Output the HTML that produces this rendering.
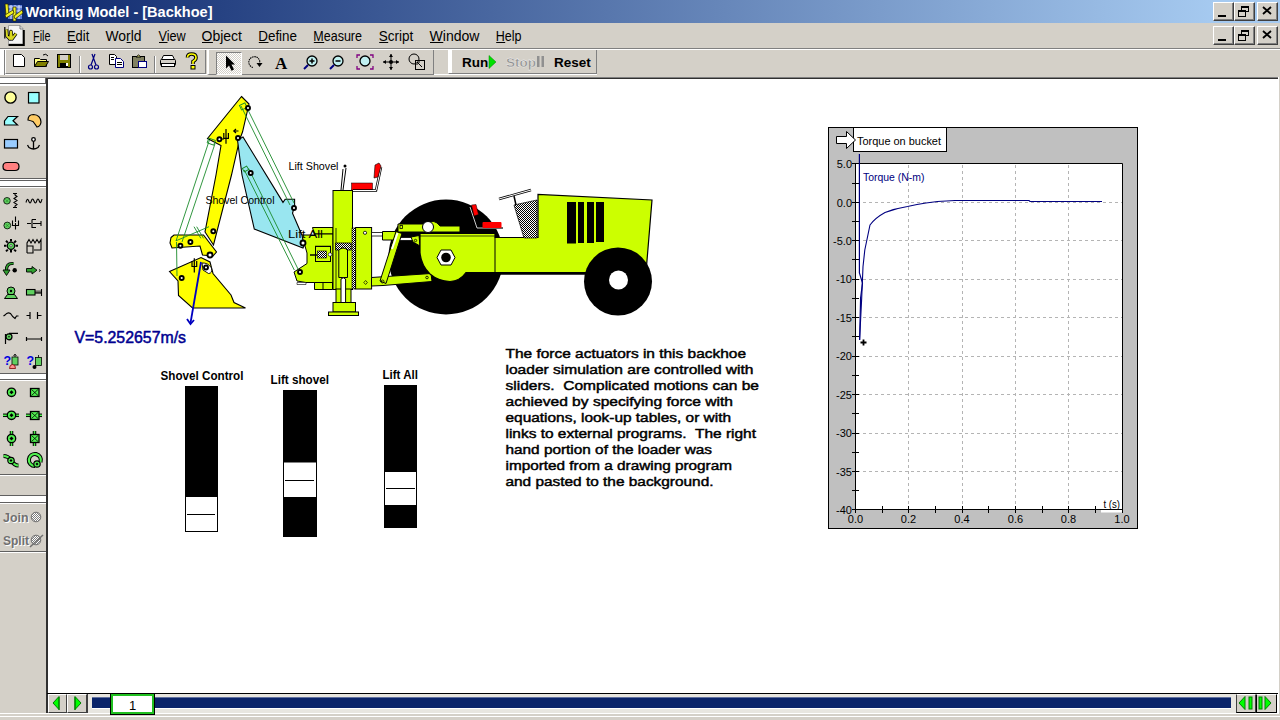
<!DOCTYPE html>
<html><head><meta charset="utf-8">
<style>
*{margin:0;padding:0;box-sizing:border-box}
html,body{width:1280px;height:720px;overflow:hidden;background:#D4D0C8;font-family:"Liberation Sans",sans-serif;position:relative}
.a{position:absolute}
#title{left:0;top:0;width:1280px;height:23px;background:linear-gradient(to right,#0A246A 0%,#A6CAF0 95%)}
#title .t{left:25px;top:3px;color:#fff;font-weight:bold;font-size:15px;letter-spacing:0.1px;white-space:nowrap}
.cb{width:21px;height:19px;background:#D4D0C8;border-top:1px solid #fff;border-left:1px solid #fff;border-right:1px solid #404040;border-bottom:1px solid #404040;box-shadow:inset -1px -1px 0 #808080}
.menu{top:27px;font-size:14px;color:#000;white-space:nowrap}
.menu u{text-decoration:none;border-bottom:1px solid #000}
#canvas{left:46px;top:78px;width:1232px;height:636px;background:#fff;border-left:2px solid #303030;border-top:1px solid #303030;box-shadow:-1px 0 0 #D4D0C8}
.lbl{font-size:12px;white-space:nowrap}
</style></head><body>
<div id="title" class="a">
  <svg class="a" style="left:2px;top:2px" width="22" height="20" viewBox="0 0 22 20">
    <rect x="6" y="3" width="14" height="14" fill="#5a7ad8"/>
    <g stroke="#fff" stroke-width="1" opacity="0.8"><line x1="6" y1="5" x2="20" y2="5"/><line x1="6" y1="9" x2="20" y2="9"/><line x1="6" y1="13" x2="20" y2="13"/><line x1="9" y1="3" x2="9" y2="17"/><line x1="13" y1="3" x2="13" y2="17"/><line x1="17" y1="3" x2="17" y2="17"/></g>
    <g fill="#f0f020" stroke="#202000" stroke-width="0.7"><polygon points="3,2 6,2 7,14 4,14"/><polygon points="11,5 14,5 14,19 11,19"/><polygon points="3,13 11,8 12,11 4,16"/><polygon points="12,14 20,8 21,11 13,17"/></g>
  </svg>
  <svg class="a" style="left:0;top:0" width="300" height="23"><text x="25.5" y="16.5" font-family="Liberation Sans" font-weight="bold" font-size="15" fill="#fff" textLength="187" lengthAdjust="spacingAndGlyphs">Working Model - [Backhoe]</text></svg>
  <div class="a cb" style="left:1213px;top:2px"></div>
  <div class="a cb" style="left:1234px;top:2px"></div>
  <div class="a cb" style="left:1257px;top:2px"></div>
</div>
<!-- menu bar -->
<div class="a" style="left:0;top:23px;width:1280px;height:25px;background:#D4D0C8"></div>
<div class="a" style="left:0;top:48px;width:1280px;height:1px;background:#808080"></div>
<div class="a" style="left:0;top:49px;width:1280px;height:1px;background:#fff"></div>
<svg class="a" style="left:0;top:23px" width="600" height="25" viewBox="0 23 600 25" font-family="Liberation Sans">
<text x="33.0" y="41" font-size="14" fill="#000" textLength="17.5" lengthAdjust="spacingAndGlyphs">File</text>
<rect x="33.5" y="42" width="6.6" height="1" fill="#000"/>
<text x="67.0" y="41" font-size="14" fill="#000" textLength="22.25" lengthAdjust="spacingAndGlyphs">Edit</text>
<rect x="67.5" y="42" width="8.6" height="1" fill="#000"/>
<text x="105.5" y="41" font-size="14" fill="#000" textLength="36" lengthAdjust="spacingAndGlyphs">World</text>
<rect x="126.6" y="42" width="4.6" height="1" fill="#000"/>
<text x="158.5" y="41" font-size="14" fill="#000" textLength="27.25" lengthAdjust="spacingAndGlyphs">View</text>
<rect x="159.0" y="42" width="8.5" height="1" fill="#000"/>
<text x="201.5" y="41" font-size="14" fill="#000" textLength="40.5" lengthAdjust="spacingAndGlyphs">Object</text>
<rect x="202.0" y="42" width="10.9" height="1" fill="#000"/>
<text x="258.25" y="41" font-size="14" fill="#000" textLength="38.75" lengthAdjust="spacingAndGlyphs">Define</text>
<rect x="258.8" y="42" width="9.7" height="1" fill="#000"/>
<text x="313.25" y="41" font-size="14" fill="#000" textLength="48.75" lengthAdjust="spacingAndGlyphs">Measure</text>
<rect x="313.8" y="42" width="10.4" height="1" fill="#000"/>
<text x="378.75" y="41" font-size="14" fill="#000" textLength="34.5" lengthAdjust="spacingAndGlyphs">Script</text>
<rect x="379.2" y="42" width="9.0" height="1" fill="#000"/>
<text x="429.5" y="41" font-size="14" fill="#000" textLength="50" lengthAdjust="spacingAndGlyphs">Window</text>
<rect x="430.0" y="42" width="13.3" height="1" fill="#000"/>
<text x="495.75" y="41" font-size="14" fill="#000" textLength="25.75" lengthAdjust="spacingAndGlyphs">Help</text>
<rect x="496.2" y="42" width="9.0" height="1" fill="#000"/>
</svg>
<div class="a cb" style="left:1213px;top:26px"></div>
<div class="a cb" style="left:1234px;top:26px"></div>
<div class="a cb" style="left:1257px;top:26px"></div>



<svg class="a" style="left:1213px;top:0" width="67" height="48" viewBox="1213 0 67 48">
 <g fill="#000">
  <rect x="1218" y="15" width="8" height="2"/>
  <rect x="1259" y="14" width="0" height="0"/>
 </g>
 <g fill="none" stroke="#000" stroke-width="1">
  <rect x="1241.5" y="6.5" width="7" height="5"/><rect x="1238.5" y="10.5" width="7" height="6" fill="#D4D0C8"/>
  <path d="M1241.5,7.5 h7 M1238.5,11.5 h7" />
 </g>
 <path d="M1263,7 L1271,14 M1271,7 L1263,14" stroke="#000" stroke-width="1.8"/>
 <g transform="translate(0,24)">
  <rect x="1218" y="15" width="8" height="2" fill="#000"/>
  <g fill="none" stroke="#000" stroke-width="1">
   <rect x="1241.5" y="6.5" width="7" height="5"/><rect x="1238.5" y="10.5" width="7" height="6" fill="#D4D0C8"/>
   <path d="M1241.5,7.5 h7 M1238.5,11.5 h7" />
  </g>
  <path d="M1263,7 L1271,14 M1271,7 L1263,14" stroke="#000" stroke-width="1.8"/>
 </g>
</svg>
<svg class="a" style="left:0;top:24px" width="30" height="24" viewBox="0 24 30 24">
 <path d="M8.5,25.5 H20 L23,28.5 V44 H8.5z" fill="#f4f4f4" stroke="#a0a0a0"/>
 <path d="M23.8,30 V45 H8.5" fill="none" stroke="#000" stroke-width="2"/>
 <path d="M20,25.5 V29 H23" fill="none" stroke="#606060" stroke-width="0.8"/>
 <path d="M4.8,27 V38.5" stroke="#000" stroke-width="1.2"/>
 <path d="M6.5,29.5 L7,36 L10,39 L11,31.5 L12,39 L16,33.5" fill="none" stroke="#000" stroke-width="3.4" stroke-linejoin="round"/>
 <path d="M6.5,29.5 L7,36 L10,39 L11,31.5 L12,39 L16,33.5" fill="none" stroke="#d8d820" stroke-width="2" stroke-linejoin="round"/>
</svg>

<!-- toolbar -->
<div class="a" style="left:0;top:50px;width:1280px;height:27px;background:#D4D0C8"></div>
<div class="a" style="left:0;top:74px;width:597px;height:1px;background:#fff"></div>
<div class="a" style="left:0;top:77px;width:1280px;height:1px;background:#808080"></div>
<div class="a" style="left:0;top:50px;width:4px;height:25px;background:#fff"></div>
<div class="a" style="left:4px;top:50px;width:1px;height:25px;background:#808080"></div>
<div class="a" style="left:5px;top:50px;width:201px;height:24px;border-left:1px solid #fff;border-right:1px solid #808080;border-bottom:1px solid #808080"></div>
<div class="a" style="left:207px;top:50px;width:227px;height:25px;border-left:2px solid #fff;border-right:1px solid #808080;border-bottom:1px solid #808080"></div>
<div class="a" style="left:448px;top:50px;width:149px;height:24px;border-left:1px solid #fff;border-right:1px solid #808080;border-bottom:1px solid #808080;box-shadow:inset 3px 0 0 #fff"></div>
<div class="a" style="left:216px;top:52px;width:26px;height:23px;background:repeating-conic-gradient(#fff 0 25%,#D4D0C8 0 50%) 0 0/2px 2px;border-top:1px solid #808080;border-left:1px solid #808080;border-right:1px solid #fff;border-bottom:1px solid #fff"></div>
<div class="a" style="left:79px;top:56px;width:1px;height:17px;background:#808080;box-shadow:1px 0 0 #fff"></div>
<div class="a" style="left:154px;top:56px;width:1px;height:17px;background:#808080;box-shadow:1px 0 0 #fff"></div>
<svg class="a" style="left:0;top:50px" width="620" height="27" viewBox="0 50 620 27">
 <!-- new -->
 <path d="M13.5,54.5 h8 l3,3 v9 h-11z" fill="#fff" stroke="#000"/>
 <!-- open -->
 <path d="M34.5,58.5 h5 l1,1 h6 v7 h-12z" fill="#ffff80" stroke="#000"/>
 <path d="M34.5,66.5 l3,-5 h11 l-3,5z" fill="#808000" stroke="#000"/>
 <path d="M43,55 q3,-2 5,1" fill="none" stroke="#000"/>
 <!-- save -->
 <rect x="57.5" y="54.5" width="13" height="13" fill="#808000" stroke="#000"/>
 <rect x="60" y="55" width="8" height="5" fill="#D4D0C8"/>
 <rect x="60" y="63" width="8" height="4" fill="#000"/><rect x="66" y="63" width="2" height="3" fill="#fff"/>
 <!-- scissors -->
 <g stroke="#000080" fill="none" stroke-width="1.2"><circle cx="90.5" cy="67" r="2"/><circle cx="96.5" cy="67" r="2"/><path d="M91,65 L95,54 M96,65 L92,54"/></g>
 <!-- copy -->
 <path d="M109.5,54.5 h5 l2,2 v8 h-7z" fill="#fff" stroke="#000"/>
 <path d="M115.5,58.5 h5 l3,3 v6 h-8z" fill="#fff" stroke="#000080"/>
 <g stroke="#000"><line x1="111" y1="57.5" x2="114" y2="57.5"/><line x1="111" y1="59.5" x2="114" y2="59.5"/><line x1="117" y1="62.5" x2="122" y2="62.5"/><line x1="117" y1="64.5" x2="122" y2="64.5"/></g>
 <!-- paste -->
 <rect x="132.5" y="56.5" width="12" height="11" fill="#808060" stroke="#000"/>
 <path d="M136,57 l2.5,-2 l2.5,2z" fill="#ffff80" stroke="#000"/>
 <rect x="138.5" y="61.5" width="8" height="6" fill="#fff" stroke="#000080"/>
 <!-- print -->
 <path d="M163.5,55.5 h9 l2,4 h-13z" fill="#fff" stroke="#000"/>
 <rect x="160.5" y="59.5" width="15" height="6" rx="1" fill="#D4D0C8" stroke="#000"/>
 <rect x="161.5" y="63.5" width="13" height="3" fill="#fff" stroke="#000"/>
 <!-- help -->
 <path d="M187.5,57.5 Q187.5,54 191.5,54 Q196,54 196,57.5 Q196,60 193,61.5 V64" fill="none" stroke="#000" stroke-width="3.6"/>
 <path d="M187.5,57.5 Q187.5,54 191.5,54 Q196,54 196,57.5 Q196,60 193,61.5 V64" fill="none" stroke="#ffff00" stroke-width="1.6"/>
 <rect x="191" y="65.5" width="4" height="3.5" fill="#ffff00" stroke="#000"/>
 <!-- arrow -->
 <path d="M226,55.5 L235,64.5 H231.5 L234,69.5 L231.5,70.8 L229,65.5 L226,68.5z" fill="#000"/>
 <!-- rotate -->
 <path d="M259.5,64 A5.5,5.5 0 1,0 253,67.5" fill="none" stroke="#000" stroke-width="1.1" stroke-dasharray="1.5 0.7"/>
 <path d="M256.5,63 h6 l-3,4z" fill="#000"/>
 <!-- A -->
 <text x="275" y="69" font-family="Liberation Serif" font-weight="bold" font-size="17" fill="#000">A</text>
 <!-- zoom in -->
 <circle cx="312" cy="61" r="5" fill="#c0f0f0" stroke="#000" stroke-width="1.3"/>
 <path d="M309.5,61 h5 M312,58.5 v5" stroke="#000" stroke-width="1.5"/>
 <path d="M308,65 l-4,4" stroke="#000080" stroke-width="2"/>
 <!-- zoom out -->
 <circle cx="338" cy="61" r="5" fill="#c0f0f0" stroke="#000" stroke-width="1.3"/>
 <path d="M335.5,61 h5" stroke="#000" stroke-width="1.5"/>
 <path d="M334,65 l-4,4" stroke="#000080" stroke-width="2"/>
 <!-- zoom fit -->
 <circle cx="365" cy="61" r="5" fill="#c0f0f0" stroke="#000" stroke-width="1.3"/>
 <path d="M357,58 v-3 h3 M370,55 h3 v3 M357,66 v3 h3 M373,66 v3 h-3" stroke="#800080" stroke-width="1.3" fill="none"/>
 <!-- move -->
 <circle cx="391" cy="62" r="2" fill="#000"/>
 <path d="M383,62 h16 M391,54 v16" stroke="#000"/>
 <path d="M383,62 l3,-2 v4z M399,62 l-3,-2 v4z M391,54 l-2,3 h4z M391,70 l-2,-3 h4z" fill="#000"/>
 <!-- zoom box -->
 <circle cx="414" cy="59" r="5" fill="none" stroke="#000"/>
 <rect x="415.5" y="60.5" width="9" height="9" fill="#D4D0C8" stroke="#000"/>
 <path d="M417,62 l5,5 M417,62 h3 M417,62 v3" stroke="#000"/>
 <!-- run/stop/reset -->
 <text x="462" y="67" font-family="Liberation Sans" font-weight="bold" font-size="13.5" fill="#000">Run</text>
 <path d="M489,55.5 l7,6.5 l-7,6.5z" fill="#00e000" stroke="#008000" stroke-width="0.5"/>
 <text x="506" y="67" font-family="Liberation Sans" font-weight="bold" font-size="13.5" fill="#909090" stroke="#fff" stroke-width="0.3">Stop</text>
 <rect x="537" y="56" width="2.5" height="11" fill="#909090"/><rect x="541.5" y="56" width="2.5" height="11" fill="#909090"/>
 <text x="554" y="67" font-family="Liberation Sans" font-weight="bold" font-size="13.5" fill="#000">Reset</text>
</svg>

<!-- canvas -->
<div id="canvas" class="a"></div>



<!-- scene -->
<svg class="a" style="left:0;top:0" width="1280" height="720" viewBox="0 0 1280 720" font-family="Liberation Sans">
 <!-- rear wheel -->
 <circle cx="446" cy="257" r="57.5" fill="#000"/>
 <!-- backhoe mount left block -->
 <defs>
  <pattern id="dots" width="2" height="2" patternUnits="userSpaceOnUse"><rect width="2" height="2" fill="#fff"/><rect width="1" height="1" fill="#000"/><rect x="1" y="1" width="1" height="1" fill="#000"/></pattern>
 </defs>
 <path d="M312.5,227.5 H333 V282.5 H306 L297,281 L294,272 L307,263.5 V253 L305,246 L301,235 H314.5z" fill="#CCFF00" stroke="#000"/>
 <path d="M314.5,233.8 H333 M315,246.3 H331" stroke="#000" stroke-width="1.2"/>
 <rect x="315.5" y="246.5" width="15" height="15" fill="none" stroke="#000"/>
 <rect x="317.5" y="251" width="9" height="7" fill="url(#dots)" stroke="#000" stroke-width="0.6"/>
 <path d="M310,255 H317" stroke="#000" stroke-width="1.5"/>
 <circle cx="330" cy="254.5" r="1.8" fill="#fff" stroke="#000" stroke-width="0.6"/>
 <path d="M297,282.5 H306 V284.5 H297z" fill="#fff" stroke="#000" stroke-width="0.6"/>
 <path d="M314.5,282.5 H332.5 V289.5 H314.5z M323,282.5 V289.5" fill="#CCFF00" stroke="#000"/>
 <!-- tower -->
 <rect x="333" y="190.5" width="19.5" height="99" fill="#CCFF00" stroke="#000"/>
 <path d="M336,228 V289" stroke="#000" stroke-width="0.8"/>
 <rect x="352" y="228" width="3.6" height="61" fill="url(#dots)" stroke="#000" stroke-width="0.6"/>
 <rect x="355.6" y="227.5" width="16" height="61.5" fill="#CCFF00" stroke="#000"/>
 <circle cx="365" cy="232.8" r="1.6" fill="#fff" stroke="#000" stroke-width="0.8"/>
 <path d="M365.6,280.5 l1.8,2 l-1.8,2 l-1.8,-2z" fill="none" stroke="#000" stroke-width="0.7"/>
 <path d="M335.6,250 V243 H351.2 V250 H346 Q343,246 340,250z" fill="url(#dots)" stroke="#000" stroke-width="0.8"/>
 <path d="M338.8,250 Q343,246 347.5,250 V277.5 H338.8z" fill="#CCFF00" stroke="#000"/>
 <rect x="336" y="289" width="15" height="13.5" fill="#CCFF00" stroke="#000"/>
 <path d="M341,302.5 V279 Q343.3,276.5 345.6,279 V302.5z" fill="#fff" stroke="#000"/>
 <rect x="333" y="302.5" width="22.5" height="9.5" fill="#CCFF00" stroke="#000"/>
 <rect x="328.5" y="312" width="30" height="3.5" fill="#CCFF00" stroke="#000"/>
 <!-- levers -->
 <path d="M341,190 L343,169 M343,190 L346,168" stroke="#000" stroke-width="1"/>
 <circle cx="345" cy="166" r="1.5" fill="#000"/>
 <rect x="351.5" y="183" width="21" height="7" fill="#ff0000" stroke="#000" stroke-width="0.5"/>
 <path d="M353,190.5 H376 L381,167" fill="none" stroke="#000" stroke-width="2.5"/>
 <path d="M353,190.5 H376 L381,167" fill="none" stroke="#fff" stroke-width="1"/>
 <path d="M375,165 L379,163 L381,166 L378,177 L374,178z" fill="#ff0000" stroke="#000" stroke-width="0.6"/>
 <!-- links to body -->
 <path d="M371.5,232.5 H384 V236 H371.5z" fill="#fff" stroke="#000" stroke-width="0.8"/>
 <path d="M382.5,231.5 H396 V240 H382.5z" fill="#CCFF00" stroke="#000"/>
 <path d="M395,237.5 H413 V240.5 H395z" fill="#fff" stroke="#000" stroke-width="0.8"/>
 <path d="M411,237 L419,235.5 L420,246 L413,242z" fill="#CCFF00" stroke="#000"/>
 <circle cx="415.5" cy="240.5" r="1.2" fill="none" stroke="#000" stroke-width="0.8"/>
 <path d="M371.5,277.5 L431,273.5 L432,281.5 L383,285.5 L371.5,286z" fill="#CCFF00" stroke="#000"/>
 <path d="M380,281 L396,231.5 L402,233.5 L386,283.5z" fill="#CCFF00" stroke="#000"/>
 <path d="M397.5,233 L392,249" stroke="#fff" stroke-width="2"/>
 <circle cx="382.5" cy="281.5" r="1.5" fill="none" stroke="#000" stroke-width="0.8"/>
 <circle cx="427" cy="277.5" r="1.3" fill="none" stroke="#000" stroke-width="0.8"/>
 <!-- fender top -->
 <path d="M398,224 H427 Q434,218 440,226 H460 V232 H398z" fill="#CCFF00" stroke="#000"/>
 <circle cx="428" cy="227" r="5.5" fill="#fff" stroke="#000"/>
 <rect x="400" y="225.5" width="2.5" height="3" fill="none" stroke="#000" stroke-width="0.8"/>
 <!-- seat -->
 <path d="M470,207 L477,228 H503" fill="none" stroke="#000" stroke-width="2"/>
 <path d="M470,207 L477,228 H503" fill="none" stroke="#fff" stroke-width="0.8"/>
 <path d="M471.5,205 L476,204.5 L478.5,214.5 L474,216z" fill="#ff0000" stroke="#000" stroke-width="0.5"/>
 <rect x="482.5" y="222" width="19" height="6" rx="1" fill="#ff0000"/>
 <!-- body -->
 <path d="M420,233.5 H495 V237.5 H538 V194.5 L652,200 L646,272.5 H466 Q460,281 450,281.5 Q438,281 430,274 Q421,265 420,252.5z" fill="#CCFF00" stroke="#000" stroke-width="1.2"/>
 <path d="M495,237.5 V272.5" stroke="#000"/>
 <path d="M420,236 H495" stroke="#000" stroke-width="0.7"/>
 <path d="M466,273.5 H586" stroke="#000" stroke-width="2.5"/>
 <!-- hub -->
 <path d="M441,250 H451 L455,257.5 L451,265 H441 L437,257.5z" fill="#fff" stroke="#000"/>
 <circle cx="446" cy="257.5" r="4.8" fill="#000"/>
 <!-- dashboard -->
 <path d="M514,205 L537,200 V238 L524,238z" fill="url(#dots)" stroke="#000" stroke-width="0.7"/>
 <path d="M499,199 L531,190" stroke="#000" stroke-width="2.5"/>
 <path d="M499,199 L531,190" stroke="#fff" stroke-width="1"/>
 <path d="M514,196 L516,205" stroke="#000" stroke-width="1.5"/>
 <!-- grille -->
 <rect x="567" y="202" width="9" height="41.5" fill="#000"/>
 <rect x="578" y="202" width="6" height="41" fill="#000"/>
 <rect x="587" y="202" width="7" height="41" fill="#000"/>
 <rect x="596" y="202" width="8" height="40" fill="#000"/>
 <!-- front wheel -->
 <circle cx="618" cy="281.5" r="34" fill="#000"/>
 <circle cx="618.5" cy="280" r="9.5" fill="#fff"/>

 <!-- backhoe: boom -->
 <path d="M241.5,96.5 L249,104 L242.5,132 L239.5,140 L231.5,175 L213.5,245 L205,232 L216,175 L221,145.5 L207.5,138.5z" fill="#FFFF00" stroke="#000" stroke-width="1.1"/>
 <!-- blue link -->
 <path d="M237.5,140 L243,137 L283,202.4 L285.2,199.3 H294.6 V206 L292.5,213.3 L302,235.2 L304,245.6 L303,248 L254.3,229 L242,175z" fill="#99E6F0" stroke="#000" stroke-width="1.1"/>
 <!-- stick -->
 <path d="M171,237.5 L174,235 L203.5,235 L216.5,252 L213,256 L202.5,255 L200,246 L172,248 L170,243z" fill="#FFFF00" stroke="#000" stroke-width="1.1"/>
 <!-- bucket -->
 <path d="M169.5,271.5 L201,257.5 L210,262 L213,273.5 L231,295 L234,302.5 L245.5,308 L192.5,308 L178.5,295.5 L178,281z" fill="#FFFF00" stroke="#000" stroke-width="1.1"/>
 <path d="M202,263 Q208,262.5 211.5,268 Q212.5,273.5 208.5,273.5 L203,270z" fill="#fff" stroke="#000" stroke-width="0.9"/>
 <!-- green actuators -->
 <g stroke="#1a8a2a" stroke-width="0.9" fill="none">
  <path d="M241,106 L290,205 M248,110 L294,203"/>
  <path d="M209.4,140 L176,241 M215,143.7 L182,242"/>
  <path d="M176.5,242 L177,276"/>
  <path d="M244.3,170 L294.3,270 M248.5,168.3 L298.5,270"/>
  <rect x="243" y="167" width="5" height="4" transform="rotate(-30 245.5 169)"/>
  <rect x="240" y="104" width="6" height="5" transform="rotate(-25 243 106)"/>
  <rect x="208" y="139" width="7" height="5" transform="rotate(20 211 141)"/>
  <path d="M194,226.7 L200.8,238.3 M196.7,226.7 L203.5,238.3 M176,240.8 L209,226.7"/>
 </g>
 <!-- pins -->
 <g fill="#fff" stroke="#000" stroke-width="1.9">
  <circle cx="248" cy="108" r="2"/>
  <circle cx="238" cy="138" r="2"/>
  <circle cx="219.4" cy="139.2" r="2"/>
  <circle cx="250.7" cy="173" r="2"/>
  <circle cx="294" cy="208" r="2"/>
  <circle cx="213.3" cy="231.3" r="2"/>
  <circle cx="180.4" cy="245.8" r="2"/>
  <circle cx="190.4" cy="242" r="2"/>
  <circle cx="210" cy="255" r="2.5"/>
  <circle cx="206" cy="267.5" r="2"/>
  <circle cx="181.7" cy="278" r="2"/>
  <circle cx="303" cy="243" r="2.5"/>
  <circle cx="300" cy="272" r="2"/>
 </g>
 <path d="M226,129 V143.8 M223.8,133 V138.3 H228.4 V133 M221,139 H224" fill="none" stroke="#000" stroke-width="1.2"/>
 <path d="M194.3,258.3 V272.5 M192,261 V266.5 H196.7 V261" fill="none" stroke="#000" stroke-width="1.2"/>
 <path d="M238.5,131 H234 M236,129 L233.8,131 L236,133" fill="none" stroke="#000" stroke-width="1.2"/>
 <!-- velocity arrow -->
 <path d="M201,262 L190.5,323" stroke="#0000C0" stroke-width="1.8"/>
 <path d="M187,319 L190.5,324 L194,320" fill="none" stroke="#0000C0" stroke-width="1.8"/>
 <!-- labels -->
 <g font-size="11" fill="#000">
  <text x="288.5" y="170" textLength="50" lengthAdjust="spacingAndGlyphs">Lift Shovel</text>
  <text x="205.5" y="204" textLength="69" lengthAdjust="spacingAndGlyphs">Shovel Control</text>
  <text x="288" y="238" textLength="35" lengthAdjust="spacingAndGlyphs">Lift All</text>
 </g>
 <text x="74.5" y="342.8" font-size="16" fill="#000090" stroke="#000090" stroke-width="0.5" textLength="111.5" lengthAdjust="spacingAndGlyphs">V=5.252657m/s</text>

 <!-- sliders -->
 <g font-weight="bold" font-size="12" fill="#000">
  <text x="160.5" y="380" textLength="83" lengthAdjust="spacingAndGlyphs">Shovel Control</text>
  <text x="270.5" y="384" textLength="58.5" lengthAdjust="spacingAndGlyphs">Lift shovel</text>
  <text x="382.5" y="379" textLength="35.5" lengthAdjust="spacingAndGlyphs">Lift All</text>
 </g>
 <rect x="185" y="386" width="33" height="146" fill="#000"/>
 <rect x="185.5" y="496.5" width="32" height="35" fill="#fff" stroke="#000"/>
 <path d="M187,514.5 H215" stroke="#000"/>
 <rect x="283" y="390" width="34" height="147" fill="#000"/>
 <rect x="284" y="462.5" width="32" height="34.5" fill="#fff"/>
 <path d="M285,480.5 H314" stroke="#000"/>
 <rect x="384" y="385" width="33" height="143" fill="#000"/>
 <rect x="385" y="472" width="31" height="33" fill="#fff"/>
 <path d="M386,488.5 H415" stroke="#000"/>

 <!-- paragraph -->
<g font-size="13" fill="#000" stroke="#000" stroke-width="0.45">
<text x="505.5" y="357.5" textLength="240.5" lengthAdjust="spacingAndGlyphs">The force actuators in this backhoe</text>
<text x="505.5" y="373.5" textLength="248.0" lengthAdjust="spacingAndGlyphs">loader simulation are controlled with</text>
<text x="505.5" y="389.5" textLength="253.5" lengthAdjust="spacingAndGlyphs">sliders. &#160;Complicated motions can be</text>
<text x="505.5" y="405.5" textLength="227.5" lengthAdjust="spacingAndGlyphs">achieved by specifying force with</text>
<text x="505.5" y="421.5" textLength="225.5" lengthAdjust="spacingAndGlyphs">equations, look-up tables, or with</text>
<text x="505.5" y="437.5" textLength="250.5" lengthAdjust="spacingAndGlyphs">links to external programs. &#160;The right</text>
<text x="505.5" y="453.5" textLength="206.5" lengthAdjust="spacingAndGlyphs">hand portion of the loader was</text>
<text x="505.5" y="469.5" textLength="226.5" lengthAdjust="spacingAndGlyphs">imported from a drawing program</text>
<text x="505.5" y="485.5" textLength="208.0" lengthAdjust="spacingAndGlyphs">and pasted to the background.</text>
</g>
</svg>

<!-- graph -->
<svg class="a" style="left:0;top:0" width="1280" height="720" viewBox="0 0 1280 720" font-family="Liberation Sans">
<rect x="828.5" y="127.5" width="309" height="401" fill="#C0C0C0" stroke="#000"/>
<rect x="855.5" y="163.5" width="267" height="346" fill="#fff"/>
<path d="M855.5,163.5 H1122.5 V509.5 M855.5,163.5 V509.5 H1122.5" stroke="#000" fill="none"/>
<path d="M857,202.5 H1122 M857,240.5 H1122 M857,279.5 H1122 M857,317.5 H1122 M857,356.5 H1122 M857,394.5 H1122 M857,433.5 H1122 M857,471.5 H1122 M908.5,165 V508 M962.5,165 V508 M1015.5,165 V508 M1068.5,165 V508" stroke="#B4B4B4" stroke-width="1" stroke-dasharray="3 3" fill="none"/>
<path d="M852,163.5 H859 M852,183.5 H859 M852,202.5 H859 M852,221.5 H859 M852,240.5 H859 M852,259.5 H859 M852,279.5 H859 M852,298.5 H859 M852,317.5 H859 M852,336.5 H859 M852,356.5 H859 M852,375.5 H859 M852,394.5 H859 M852,413.5 H859 M852,433.5 H859 M852,452.5 H859 M852,471.5 H859 M852,490.5 H859 M852,509.5 H859 M855.5,506 V513 M882.5,506 V513 M908.5,506 V513 M935.5,506 V513 M962.5,506 V513 M988.5,506 V513 M1015.5,506 V513 M1042.5,506 V513 M1068.5,506 V513 M1095.5,506 V513 M1122.5,506 V513" stroke="#000" stroke-width="1" fill="none"/>
<g font-size="11" fill="#000" text-anchor="end">
<text x="852" y="167.5">5.0</text>
<text x="852" y="206.5">0.0</text>
<text x="852" y="244.5">-5.0</text>
<text x="852" y="283">-10</text>
<text x="852" y="321.5">-15</text>
<text x="852" y="360">-20</text>
<text x="852" y="398.5">-25</text>
<text x="852" y="437">-30</text>
<text x="852" y="475.5">-35</text>
<text x="852" y="513.5">-40</text>
</g><g font-size="11" fill="#000" text-anchor="middle">
<text x="855.5" y="523">0.0</text>
<text x="908.5" y="523">0.2</text>
<text x="962" y="523">0.4</text>
<text x="1015.5" y="523">0.6</text>
<text x="1068.5" y="523">0.8</text>
<text x="1122" y="523">1.0</text>
</g>
<text x="1103.5" y="507.5" font-size="11" fill="#000" textLength="16.5" lengthAdjust="spacingAndGlyphs">t (s)</text>
<rect x="1101" y="510" width="21" height="2.5" fill="#fff"/>
<rect x="853.5" y="127.5" width="93" height="24" fill="#fff" stroke="#000"/>
<text x="857" y="145" font-size="11.5" fill="#000" textLength="84" lengthAdjust="spacingAndGlyphs">Torque on bucket</text>
<path d="M836.5,136.5 H846.5 V131.5 L855.5,140 L846.5,148.5 V143.5 H836.5z" fill="#fff" stroke="#000"/>
<text x="863" y="180.5" font-size="11" fill="#000080" textLength="61.5" lengthAdjust="spacingAndGlyphs">Torque (N-m)</text>
<path d="M859.4,154 V273 L862.5,283 L860.6,298 L859.6,340" fill="none" stroke="#000080" stroke-width="1.2"/>
<path d="M859.6,340 L861.7,298 L863,266.7 L864.8,250 L870,225 Q875,218 885,212.5 Q895,208.5 907.5,206.5 L917,204.5 L926,203 L937.5,201.5 L955,200.5 H1029 L1030,201.5 H1102" fill="none" stroke="#000080" stroke-width="1.1"/>
<path d="M863.5,339.5 V345.5 M860.5,342.5 H866.5" stroke="#000" stroke-width="1.8"/>
</svg>
<!-- left palette -->
<div class="a" style="left:0;top:78px;width:46px;height:6px;background:#fff;border-bottom:1px solid #606060;border-right:1px solid #606060"></div>
<div class="a" style="left:0;top:84px;width:46px;height:2px;background:#fff"></div>
<div class="a" style="left:0;top:713px;width:46px;height:1px;background:#606060"></div>
<div class="a" style="left:0;top:178px;width:46px;height:1px;background:#606060"></div>
<div class="a" style="left:0;top:179px;width:46px;height:1px;background:#fff"></div>
<div class="a" style="left:0;top:180px;width:46px;height:7px;background:#fff;border-top:1px solid #606060;border-bottom:1px solid #606060"></div>
<div class="a" style="left:0;top:187px;width:46px;height:1px;background:#fff"></div>
<div class="a" style="left:0;top:373px;width:46px;height:7px;background:#fff;border-top:1px solid #606060;border-bottom:1px solid #606060"></div>
<div class="a" style="left:0;top:380px;width:46px;height:1px;background:#fff"></div>
<div class="a" style="left:0;top:474px;width:46px;height:1px;background:#606060"></div>
<div class="a" style="left:0;top:475px;width:46px;height:1px;background:#fff"></div>
<div class="a" style="left:0;top:495px;width:46px;height:8px;background:#fff;border-top:1px solid #606060;border-bottom:1px solid #606060"></div>
<div class="a" style="left:0;top:503px;width:46px;height:1px;background:#fff"></div>
<div class="a" style="left:0;top:551px;width:46px;height:1px;background:#606060"></div>
<div class="a" style="left:0;top:552px;width:46px;height:1px;background:#fff"></div>
<svg class="a" style="left:0;top:77px" width="46" height="480" viewBox="0 77 46 480">
 <circle cx="10.5" cy="97.5" r="5.6" fill="#ffff99" stroke="#000" stroke-width="1.4"/>
 <rect x="28.5" y="92.5" width="10.5" height="10.5" fill="#99ffff" stroke="#000" stroke-width="1.2"/>
 <path d="M4.5,125 V121 L8,116.5 H17.5 L13,120.7 L17.5,125z" fill="#99ffff" stroke="#000" stroke-width="1.2"/>
 <path d="M28,120 Q28,114.5 33.5,114.5 Q40.5,115 41,122 Q40.5,126.5 37,127 Q35,124 33,121.5 Q30,120.5 28,120z" fill="#ffcc66" stroke="#000" stroke-width="1.2"/>
 <rect x="4.5" y="139.5" width="13" height="8.5" fill="#99ccff" stroke="#000" stroke-width="1.2"/>
 <g stroke="#000" fill="none" stroke-width="1.3"><circle cx="33.5" cy="139.5" r="1.8" fill="#fff"/><path d="M33.5,141.5 V149 M27.5,145 L29,147.5 Q33.5,150.5 38,147.5 L39.5,145"/></g>
 <path d="M7,162.5 H15 Q19,162.5 19,166.5 Q19,170.5 15,170.5 H7 Q3,170.5 3,166.5 Q3,162.5 7,162.5z" fill="#ff8080" stroke="#000" stroke-width="1.2"/>
 <!-- row 200 -->
 <circle cx="7" cy="200.8" r="3.3" fill="#60d060" stroke="#000" stroke-width="0.8"/><path d="M5.5,199.3 l3,3 M8.5,199.3 l-3,3" stroke="#208020" stroke-width="0.6"/>
 <path d="M13,193.5 h4 M15,193.5 v1.5 l2,1.5 l-3,2 l3,2 l-3,2 l3,2 l-2,1.5 v1.5 M13,207.5 h4" fill="none" stroke="#000" stroke-width="1.1"/>
 <path d="M26,202.5 Q27.3,197 28.7,201 T31.3,201 T34,201 T36.7,201 T39.3,201 T42,199" fill="none" stroke="#000" stroke-width="1.1"/>
 <circle cx="7.3" cy="225.5" r="3.4" fill="#60d060" stroke="#000" stroke-width="0.8"/><path d="M5.8,224 l3,3 M8.8,224 l-3,3" stroke="#208020" stroke-width="0.6"/>
 <path d="M15.5,216.5 V222 M12.5,220.5 V225.5 H18.5 V220.5 M15.5,223 V229.5" fill="none" stroke="#000" stroke-width="1.1"/>
 <path d="M27,223.5 H31 M32,219.5 H36 M32,219.5 V227.5 H36 M33,223.5 H41 M41,221 V226" fill="none" stroke="#000" stroke-width="1.1"/>
 <circle cx="11" cy="245.8" r="3.6" fill="#60e060" stroke="#000" stroke-width="1.3"/><circle cx="11" cy="245.8" r="1.2" fill="#fff" stroke="#000" stroke-width="0.6"/>
 <g stroke="#000" stroke-width="2"><path d="M11,239 v2.5 M11,250 v2.5 M4,245.8 h2.5 M15.5,245.8 h2.5 M6,240.8 l1.8,1.8 M14.2,249.6 l1.8,1.8 M16,240.8 l-1.8,1.8 M7.8,249.6 l-1.8,1.8"/></g>
 <path d="M27,253 V243 L29,239.5 L31,243 L33,239.5 L35,243 L37,239.5 L39,243 L41,239.5 V250 H34 M27,246 H33 V253 H27" fill="none" stroke="#000" stroke-width="1.1"/>
 <path d="M13.5,263.5 H12 Q6.5,263.5 6.5,270" fill="none" stroke="#000" stroke-width="3.2"/>
 <path d="M13.5,263.5 H12 Q6.5,263.5 6.5,270" fill="none" stroke="#30a030" stroke-width="1.6"/>
 <path d="M3,270 H10 L6.5,275.5z" fill="#30a030" stroke="#000" stroke-width="0.9"/>
 <circle cx="14.7" cy="270.3" r="2.2" fill="#000"/>
 <path d="M26.5,268.5 H32 V266.5 L37,270.2 L32,274 V272 H26.5z" fill="#30a030" stroke="#000" stroke-width="0.9"/>
 <path d="M39,269.5 l1.5,1 l-1.5,1" stroke="#000" fill="none" stroke-width="0.9"/>
 <circle cx="11" cy="291" r="4" fill="#60d060" stroke="#000" stroke-width="1"/><circle cx="11" cy="291" r="1.2" fill="#000"/>
 <path d="M4.5,298.5 L7.5,294.5 H14.5 L17.5,298.5z" fill="#60d060" stroke="#000" stroke-width="1"/>
 <rect x="26.5" y="289.5" width="8.5" height="5.5" fill="#60d060" stroke="#000" stroke-width="1.1"/><path d="M35,292.2 H41 M41.5,289 V296" stroke="#000" stroke-width="1.1"/><path d="M35,291 H41 M35,293.5 H41" stroke="#000" stroke-width="0.6"/>
 <path d="M3.5,316 L5,315 Q7.5,311.5 10.5,313.5 Q13,317.5 15,318.5 L16.5,316 L18.5,316" fill="none" stroke="#000" stroke-width="1.2"/>
 <path d="M26.5,315.5 H30 M30,312 V319 M37.5,312 V319 M37.5,315.5 H41.5" stroke="#000" stroke-width="1.2"/>
 <circle cx="9" cy="336.8" r="3" fill="#60d060" stroke="#000" stroke-width="1.2"/><circle cx="9" cy="336.8" r="0.8" fill="#000"/>
 <path d="M5.5,334 V344 M9,333.3 H18" stroke="#000" stroke-width="1.2"/>
 <path d="M26.5,339 H41.5 M26.5,337 V341 M41.5,337 V341" stroke="#000" stroke-width="1.2"/>
 <text x="3.5" y="365" font-family="Liberation Sans" font-weight="bold" font-size="12.5" fill="#0000e0">?</text>
 <rect x="12" y="357" width="6" height="8" fill="#60d060" stroke="#000" stroke-width="0.8"/><path d="M15,354.5 V357 M13.5,356 L15,354 L16.5,356" stroke="#000" stroke-width="0.8" fill="none"/>
 <path d="M9.5,368.5 Q9.5,364.5 12.5,364.5 Q15.5,364.5 15.5,368.5z" fill="#ff9090" stroke="#800000" stroke-width="0.8"/>
 <text x="26.5" y="365" font-family="Liberation Sans" font-weight="bold" font-size="12.5" fill="#0000e0">?</text>
 <rect x="35.5" y="357.5" width="6" height="8" fill="#60d060" stroke="#000" stroke-width="0.8"/><path d="M38.5,355 V357.5" stroke="#000" stroke-width="0.8"/>
 <circle cx="34.5" cy="367" r="2" fill="#000"/>
 <!-- joints -->
 <circle cx="11.5" cy="392.3" r="4.2" fill="#50f050" stroke="#000" stroke-width="1.3"/><path d="M11.5,390.3 l2,2 l-2,2 l-2,-2z" fill="#000"/>
 <rect x="30.5" y="388.5" width="8.5" height="8" fill="#50f050" stroke="#000" stroke-width="1.3"/><path d="M31.5,389.5 l6.5,6 M38,389.5 l-6.5,6" stroke="#000" stroke-width="0.8"/>
 <path d="M3,415.3 h16" stroke="#000" stroke-width="3.5"/><path d="M3,415.3 h16" stroke="#50f050" stroke-width="1.5"/>
 <circle cx="11.5" cy="415.3" r="4.2" fill="#50f050" stroke="#000" stroke-width="1.3"/><path d="M11.5,413.3 l2,2 l-2,2 l-2,-2z" fill="#000"/>
 <path d="M26,415.3 h16" stroke="#000" stroke-width="3.5"/><path d="M26,415.3 h16" stroke="#50f050" stroke-width="1.5"/>
 <rect x="30.5" y="411.5" width="8.5" height="8" fill="#50f050" stroke="#000" stroke-width="1.3"/><path d="M31.5,412.5 l6.5,6 M38,412.5 l-6.5,6" stroke="#000" stroke-width="0.8"/>
 <path d="M11.5,431 v15" stroke="#000" stroke-width="3.5"/><path d="M11.5,431 v15" stroke="#50f050" stroke-width="1.5"/>
 <circle cx="11.5" cy="438.5" r="4.2" fill="#50f050" stroke="#000" stroke-width="1.3"/><path d="M11.5,436.5 l2,2 l-2,2 l-2,-2z" fill="#000"/>
 <path d="M34.5,431 v15" stroke="#000" stroke-width="3.5"/><path d="M34.5,431 v15" stroke="#50f050" stroke-width="1.5"/>
 <rect x="30.5" y="434.5" width="8.5" height="8" fill="#50f050" stroke="#000" stroke-width="1.3"/><path d="M31.5,435.5 l6.5,6 M38,435.5 l-6.5,6" stroke="#000" stroke-width="0.8"/>
 <path d="M3.5,456 Q8,456 11,460 Q14,465.5 18.5,465.5" fill="none" stroke="#000" stroke-width="4"/><path d="M3.5,456 Q8,456 11,460 Q14,465.5 18.5,465.5" fill="none" stroke="#50f050" stroke-width="2"/>
 <circle cx="11" cy="460.5" r="3.2" fill="#50f050" stroke="#000" stroke-width="1.2"/><path d="M11,459 l1.5,1.5 l-1.5,1.5 l-1.5,-1.5z" fill="#000"/>
 <path d="M35,466 A6,6 0 1,1 40.5,462" fill="none" stroke="#000" stroke-width="4.2"/><path d="M35,466 A6,6 0 1,1 40.5,462" fill="none" stroke="#50f050" stroke-width="2.2"/>
 <circle cx="37" cy="464" r="3.2" fill="#50f050" stroke="#000" stroke-width="1.2"/><path d="M37,462.5 l1.5,1.5 l-1.5,1.5 l-1.5,-1.5z" fill="#000"/>
 <g font-family="Liberation Sans" font-weight="bold" font-size="13">
  <text x="4" y="523" fill="#fff" textLength="25.5" lengthAdjust="spacingAndGlyphs">Join</text>
  <text x="3" y="522" fill="#707070" textLength="25.5" lengthAdjust="spacingAndGlyphs">Join</text>
  <text x="4" y="546" fill="#fff" textLength="26" lengthAdjust="spacingAndGlyphs">Split</text>
  <text x="3" y="545" fill="#707070" textLength="26" lengthAdjust="spacingAndGlyphs">Split</text>
 </g>
 <circle cx="36" cy="517" r="4.8" fill="url(#dots2)" stroke="#707070" stroke-width="1"/>
 <circle cx="36" cy="540" r="4.8" fill="url(#dots2)" stroke="#707070" stroke-width="1"/><path d="M30,547 l13,-12" stroke="#707070" stroke-width="1.5"/>
 <defs><pattern id="dots2" width="2" height="2" patternUnits="userSpaceOnUse"><rect width="2" height="2" fill="#fff"/><rect width="1" height="1" fill="#808080"/><rect x="1" y="1" width="1" height="1" fill="#808080"/></pattern></defs>
</svg>



<!-- bottom -->
<div class="a" style="left:47px;top:693px;width:1231px;height:1px;background:#000"></div>
<div class="a" style="left:0;top:713px;width:1280px;height:7px;background:#D4D0C8;border-top:1px solid #fff"></div>
<div class="a" style="left:0;top:716px;width:1280px;height:1px;background:#fff"></div>
<div class="a" style="left:1278px;top:77px;width:2px;height:637px;background:#D4D0C8;border-left:1px solid #fff"></div>
<div class="a" style="left:48px;top:694px;width:19px;height:19px;background:#D4D0C8;border-top:1px solid #fff;border-left:1px solid #fff;border-right:1px solid #404040;border-bottom:1px solid #404040"></div>
<div class="a" style="left:67px;top:694px;width:20px;height:19px;background:#D4D0C8;border-top:1px solid #fff;border-left:1px solid #fff;border-right:1px solid #404040;border-bottom:1px solid #404040"></div>
<div class="a" style="left:87px;top:694px;width:1149px;height:19px;background:#E8E6E0;border-left:1px solid #404040"></div>
<div class="a" style="left:92px;top:697px;width:1139px;height:11px;background:#0A246A;border-top:1px solid #6070a0;box-shadow:0 1px 0 #fff"></div>
<div class="a" style="left:111px;top:694px;width:43px;height:20px;background:#fff;border:2px solid #20c020;outline:1px solid #000;font-size:13px;text-align:center;line-height:18px;padding-top:1px">1</div>
<div class="a" style="left:1236px;top:694px;width:20px;height:19px;background:#D4D0C8;border-top:1px solid #fff;border-left:1px solid #404040;border-right:1px solid #404040;border-bottom:1px solid #000"></div>
<div class="a" style="left:1256px;top:694px;width:21px;height:19px;background:#D4D0C8;border-top:1px solid #fff;border-left:1px solid #000;border-right:1px solid #000;border-bottom:1px solid #000"></div>
<svg class="a" style="left:0;top:690px" width="1280" height="30" viewBox="0 690 1280 30">
 <path d="M53,703 l6,-6.5 v13z" fill="#00ff00" stroke="#008000"/><path d="M59,697 v13" stroke="#008000" stroke-width="1.2"/>
 <path d="M75,696.5 l6,6.5 l-6,6.5z" fill="#00ff00" stroke="#008000"/><path d="M75,697 v13" stroke="#008000" stroke-width="1.2"/>
 <path d="M1239,703 l6,-6.5 v13z" fill="#00ff00" stroke="#008000"/><rect x="1249" y="697" width="3" height="12" fill="#00ff00" stroke="#008000"/>
 <rect x="1259" y="697" width="3" height="12" fill="#00ff00" stroke="#008000"/><path d="M1265,696.5 l6,6.5 l-6,6.5z" fill="#00ff00" stroke="#008000"/>
</svg>


</body></html>
